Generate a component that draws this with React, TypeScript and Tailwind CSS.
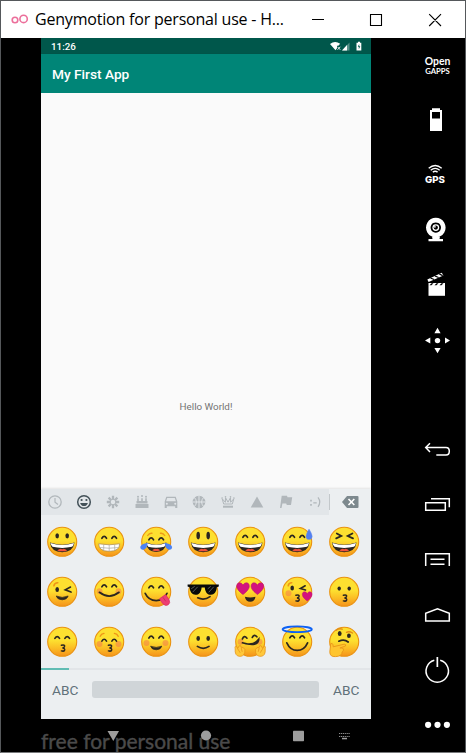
import type { ReactNode } from 'react';

const INK = '#2b2620';

function Face({ children, over }: { children: ReactNode; over?: ReactNode }) {
  return (
    <svg className="block h-8 w-8 shrink-0 overflow-visible" viewBox="-16.2 -15.8 32 32">
      <circle r="14.5" fill="url(#skin)" stroke="#ea9210" strokeWidth="1.1" />
      {children}
      {over}
    </svg>
  );
}

function Arcs({ y = -4, s = 1 }: { y?: number; s?: number }) {
  return (
    <g fill="none" stroke={INK} strokeWidth="1.7" strokeLinecap="round">
      <path d={`M${-7.3 * s} ${y + 1}q2.3 -3.7 4.6 0`} />
      <path d={`M${2.7 * s} ${y + 1}q2.3 -3.7 4.6 0`} />
    </g>
  );
}

function Dots({ y = -4, rx = 1.6, ry = 2.3 }: { y?: number; rx?: number; ry?: number }) {
  return (
    <g fill={INK}>
      <ellipse cx="-5" cy={y} rx={rx} ry={ry} />
      <ellipse cx="5" cy={y} rx={rx} ry={ry} />
    </g>
  );
}

function Grin() {
  return (
    <g>
      <path d="M-12.3 .8Q0 5 12.3 .8Q11 10.4 0 10.4Q-11 10.4 -12.3 .8Z" fill={INK} />
      <path d="M-11.8 1.2Q0 5 11.8 1.2Q11 4.3 9.7 5Q0 7.3 -9.7 5Q-11 4 -11.8 1.2Z" fill="#fff" />
      <path d="M-5 8.6Q-2 6.2 0 7.4Q2 6.2 5 8.6Q0 10.5 -5 8.6Z" fill="#f0503c" />
    </g>
  );
}

function Blush({ y = 1.5 }: { y?: number }) {
  return (
    <g fill="#f47b4c" opacity=".55">
      <circle cx="-9.7" cy={y} r="3" />
      <circle cx="9.3" cy={y} r="3" />
    </g>
  );
}

function Kiss({ x = 1 }: { x?: number }) {
  return (
    <path
      transform={`translate(${x} 6.3)`}
      d="M-1.8 -2.8Q2 -3.6 1.3 -1.5Q.8 -.4 -.7 0Q2 .3 1.4 2Q.8 3.5 -1.8 2.8"
      fill="none"
      stroke={INK}
      strokeWidth="1.5"
      strokeLinecap="round"
    />
  );
}

function Smile({ d }: { d: string }) {
  return <path d={d} fill="none" stroke={INK} strokeWidth="1.7" strokeLinecap="round" />;
}

function Heart({ x, y, s }: { x: number; y: number; s: number }) {
  return (
    <path
      transform={`translate(${x} ${y}) scale(${s})`}
      d="M0 6C-3 3.5 -6 1 -6 -2C-6 -6 -1.6 -6.3 0 -3C1.6 -6.3 6 -6 6 -2C6 1 3 3.5 0 6Z"
      fill="#d3127f"
      stroke="#b80b70"
      strokeWidth=".5"
    />
  );
}

function Emojis() {
  return (
    <div className="grid grid-cols-[repeat(7,32px)] gap-x-[15px] gap-y-[18px] pt-[11px] pl-[5px]">
      <Face><Dots y={-6} rx={1.8} ry={2.6} /><Grin /></Face>
      <Face>
        <Arcs y={-4.5} />
        <path d="M-10.5 2Q0 4 10.5 2Q10.5 9.5 0 9.5Q-10.5 9.5 -10.5 2Z" fill="#fff" stroke="#a68b5a" strokeWidth=".7" />
        <path d="M-9.5 5.7Q0 7.2 9.5 5.7M-5.5 3V9M0 3.2V9.3M5.5 3V9" fill="none" stroke="#aaa9a0" strokeWidth=".7" />
      </Face>
      <Face
        over={
          <g fill="#4d82f3">
            <path d="M-8.5 1Q-14.8 2 -16 5.3Q-15.8 9 -12 7.7Q-9 6.5 -8.5 1Z" />
            <path d="M8.5 1Q14.8 2 16 5.3Q15.8 9 12 7.7Q9 6.5 8.5 1Z" />
          </g>
        }
      >
        <Arcs y={-3} />
        <path d="M-8.5 -6.3Q-6.8 -9 -4.3 -8.5M8.5 -6.3Q6.8 -9 4.3 -8.5" fill="none" stroke="#ed9b19" strokeWidth="1.4" strokeLinecap="round" />
        <g transform="scale(.83 .98)"><Grin /></g>
      </Face>
      <Face><Dots y={-6.2} rx={1.8} ry={3.8} /><Grin /></Face>
      <Face><Arcs y={-5.5} /><Grin /></Face>
      <Face over={<path d="M11.8 -12.8Q15 -8 15 -5.3A3.1 3.1 0 0 1 8.8 -5.3Q8.8 -8 11.8 -12.8Z" fill="#5480f0" stroke="#7396e9" strokeWidth=".4" />}>
        <Arcs y={-5.5} /><Grin />
      </Face>
      <Face>
        <path d="M-7.4 -8.3L-2.9 -5.8L-8 -3.4M8.2 -8.3L3.5 -5.8L8.8 -3.4" fill="none" stroke={INK} strokeWidth="1.8" strokeLinecap="round" />
        <Grin />
      </Face>

      <Face>
        <path d="M-8.3 -6Q-7.7 -9 -4.4 -9" fill="none" stroke="#ee9417" strokeWidth="1.6" strokeLinecap="round" />
        <ellipse cx="-5" cy="-2.3" rx="1.8" ry="2.5" fill={INK} />
        <path d="M8.3 -4.8L3 -2L8.8 .3" fill="none" stroke={INK} strokeWidth="1.6" strokeLinecap="round" />
        <path d="M-6 4.2Q0 7 6 4.2Q4.8 8 0 8Q-4.8 8 -6 4.2Z" fill={INK} stroke={INK} strokeWidth=".7" />
      </Face>
      <Face><Blush y={-.5} /><Arcs y={-6} /><Smile d="M-9.8 .5Q0 8 9.8 .5" /></Face>
      <Face
        over={
          <g transform="rotate(-35 8.5 8.5)">
            <path d="M5 4.3H12.5V10A3.8 5 0 0 1 5 10Z" fill="#ed3e72" stroke="#d82f61" strokeWidth=".7" />
            <path d="M8.8 5V10" stroke="#c52b58" strokeWidth=".8" />
          </g>
        }
      >
        <Arcs y={-5} /><Smile d="M-11 1.5Q-7.7 8.5 0 8.8Q7 8.5 10.8 1.5" />
      </Face>
      <Face
        over={
          <g>
            <path d="M-15.6 -7.4H15.6V-5.2L13.6 -4.5C13.4 0 11 3 7.8 3C4 3 2 .2 1.6 -4.4H-1.6C-2 .2 -4 3 -7.8 3C-11 3 -13.4 0 -13.6 -4.5L-15.6 -5.2Z" fill="#070909" />
            <path d="M-12 -3L-8.5 -5.4M-10.5 .3L-5.5 -5M4.5 -3L7.5 -5.4M5.5 .5L10.5 -5" stroke="#565b5e" strokeWidth="1" />
          </g>
        }
      >
        <Smile d="M-5.5 6Q1 9 6.8 4.8" />
      </Face>
      <Face over={<g><Heart x={-7.2} y={-3.5} s={1.05} /><Heart x={7.2} y={-3.5} s={1.05} /></g>}>
        <path d="M-5.3 5Q0 6.3 5.3 5Q4.5 10 0 10Q-4.5 10 -5.3 5Z" fill={INK} />
      </Face>
      <Face over={<Heart x={10} y={4.3} s={.82} />}>
        <circle cx="-8.7" cy="1.5" r="3" fill="#f47b4c" opacity=".55" />
        <path d="M-9 -6Q-8.5 -9 -5.5 -9" fill="none" stroke="#ee9417" strokeWidth="1.6" strokeLinecap="round" />
        <ellipse cx="-5" cy="-3.8" rx="1.8" ry="2.5" fill={INK} />
        <path d="M8 -6L3.2 -3.3L8.3 -1.8" fill="none" stroke={INK} strokeWidth="1.6" strokeLinecap="round" />
        <Kiss x={0.5} />
      </Face>
      <Face><Dots y={-3.2} rx={1.7} ry={2.1} /><Kiss /></Face>

      <Face><Arcs y={-4.4} /><Kiss /></Face>
      <Face>
        <Blush y={2.3} />
        <path d="M-9 -5.5Q-8 -8 -5.2 -8.4M9 -5.5Q8 -8 5.2 -8.4" fill="none" stroke="#ee9417" strokeWidth="1.4" strokeLinecap="round" />
        <Arcs y={-1.7} /><Kiss />
      </Face>
      <Face>
        <Blush y={1.3} /><Arcs y={-4.8} />
        <path d="M-5.6 4.4Q0 6.8 5.6 4.4Q4.5 8 0 8Q-4.5 8 -5.6 4.4Z" fill={INK} stroke={INK} strokeWidth=".7" />
      </Face>
      <Face><Dots y={-3.3} rx={1.8} ry={2.4} /><Smile d="M-5.8 4.6Q0 8.5 5.8 4.6" /></Face>
      <Face
        over={
          <g fill="#ffc83b" stroke="#e99518" strokeWidth=".8">
            <path d="M-15 7Q-15.8 3.8 -13.6 4.7L-12.5 6.8L-11 4Q-9 3.2 -9 5.5L-6.7 6Q-4.5 7 -5.5 11Q-7 15 -11 14.5Q-15.6 14 -15 7Z" />
            <path d="M15 7Q15.8 3.8 13.6 4.7L12.5 6.8L11 4Q9 3.2 9 5.5L6.7 6Q4.5 7 5.5 11Q7 15 11 14.5Q15.6 14 15 7Z" />
            <path d="M-12.5 7L-10 11M-9 6L-8 10M12.5 7L10 11M9 6L8 10" fill="none" />
          </g>
        }
      >
        <Blush y={0} />
        <g transform="rotate(-8)"><Arcs y={-5} /></g>
        <Smile d="M-7.7 1Q3 4.7 8.5 -2.5Q8.3 5.5 -7.7 1" />
      </Face>
      <Face over={<ellipse cx="0" cy="-12.5" rx="14.6" ry="2.9" fill="none" stroke="#0d61f4" strokeWidth="1.8" />}>
        <Arcs y={-5} /><Smile d="M-10.4 1Q-7 8.6 0 8.6Q7 8.6 10.4 1" />
      </Face>
      <Face
        over={
          <path
            d="M-13.5 2Q-11.8 .8 -11.2 3L-11 5L0 2.4Q2.3 2.5 1.3 4.2L-4.3 6.2Q0 6 -.8 8Q-.5 9.2 -2 10Q-2.2 14.5 -8.5 14.8Q-14.5 15.3 -14.4 10Z"
            fill="#ffc52f"
            stroke="#e99518"
            strokeWidth=".9"
          />
        }
      >
        <path d="M-8 -11.5Q-5 -14 -2 -12.6M2.3 -9.5Q5 -11 8.3 -8.8" fill="none" stroke="#e38d16" strokeWidth="1.4" strokeLinecap="round" />
        <ellipse cx="-4.5" cy="-8.3" rx="1.9" ry="2.5" fill={INK} />
        <ellipse cx="4.7" cy="-6" rx="1.9" ry="2.3" fill={INK} />
        <Smile d="M-5.4 -.6Q0 -3.2 4 .2" />
      </Face>
    </div>
  );
}

function Tab({ children }: { children: ReactNode }) {
  return (
    <div className="flex items-center justify-center">
      <svg className="block h-4 w-4 overflow-visible" viewBox="-8 -8 16 16" fill="#b1b7bb">
        {children}
      </svg>
    </div>
  );
}

function Categories() {
  return (
    <div className="grid w-[288px] grid-cols-10 bg-[#e2e6e9]">
      <Tab>
        <circle r="6.2" fill="none" stroke="#b1b7bb" strokeWidth="1.3" />
        <path d="M0 -4V.2L3 2.5" fill="none" stroke="#b1b7bb" strokeWidth="1.2" />
      </Tab>
      <Tab>
        <circle r="6.3" fill="none" stroke="#435158" strokeWidth="1.5" />
        <g fill="#435158">
          <circle cx="-2.4" cy="-2" r="1.1" />
          <circle cx="2.4" cy="-2" r="1.1" />
          <path d="M-3.9 1H3.9Q3 4.1 0 4.1Q-3 4.1 -3.9 1Z" />
        </g>
      </Tab>
      <Tab>
        <g stroke="#b1b7bb" strokeWidth="2.3">
          <path d="M0 -6.2V-2.6M0 6.2V2.6M-6.2 0H-2.6M6.2 0H2.6M-4.4 -4.4L-2 -2M4.4 4.4L2 2M-4.4 4.4L-2 2M4.4 -4.4L2 -2" />
        </g>
        <circle r="2.8" fill="none" stroke="#b1b7bb" strokeWidth="1" />
      </Tab>
      <Tab>
        <path d="M-4.8 -3.7H-3.2V-1H-.8V-3.7H.8V-1H3.2V-3.7H4.8V-1H5.5V1.5H-5.5V-1H-4.8ZM-6.5 2H6.5V6H-6.5Z" />
        <circle cx="-4" cy="-5.3" r="1" /><circle cy="-6" r="1" /><circle cx="4" cy="-5.3" r="1" />
      </Tab>
      <Tab>
        <path fillRule="evenodd" d="M-4.7 -5.3H4.7L6.3 -.5V6H4.2V4.3H-4.2V6H-6.3V-.5ZM-3.8 -4L-4.9 -.8H4.9L3.8 -4ZM-4.2 .7A1 1 0 1 0 -4.1 2.7A1 1 0 1 0 -4.2 .7ZM4.2 .7A1 1 0 1 0 4.3 2.7A1 1 0 1 0 4.2 .7Z" />
      </Tab>
      <Tab>
        <circle r="6.3" />
        <path d="M0 -6.3V6.3M-6.3 0H6.3M-4.8 -4.8Q-.4 0 -4.8 4.8M4.8 -4.8Q.4 0 4.8 4.8" fill="none" stroke="#e2e6e9" strokeWidth="1" />
      </Tab>
      <Tab>
        <path d="M-4.3 2L-5.8 -3.2L-2.6 .3L-2.5 -4.4L0 .2L2.5 -4.4L2.6 .3L5.8 -3.2L4.3 2Z" fill="none" stroke="#b1b7bb" strokeWidth="1" />
        <path d="M-5 3.7H5V5.7H-5Z" />
        <circle cx="-5.9" cy="-4" r=".8" /><circle cx="-2.5" cy="-5.2" r=".8" /><circle cx="2.5" cy="-5.2" r=".8" /><circle cx="5.9" cy="-4" r=".8" />
      </Tab>
      <Tab><path d="M0 -5.5L6.3 5.6H-6.3Z" /></Tab>
      <Tab><path d="M-4.3 -6.2H1L1.5 -4.8H6.2L5 3H.8L.2 1.5H-3.6L-4.5 6H-6Z" /></Tab>
      <Tab>
        <path d="M-4.8 -2.2h1.6v1.7h-1.6zM-4.8 2h1.6v1.7h-1.6zM-1.7 .2h3.4v1.2h-3.4z" />
        <path d="M3 -4.6Q6.5 .1 3 4.8" fill="none" stroke="#b1b7bb" strokeWidth="1.2" />
      </Tab>
    </div>
  );
}

function Tool({ children }: { children?: ReactNode }) {
  return (
    <svg className="block h-[55px] w-10 shrink-0" viewBox="0 0 40 55" fill="#fff">
      {children}
    </svg>
  );
}

function Line({ d }: { d: string }) {
  return <path d={d} fill="none" stroke="#fff" strokeWidth="1.5" />;
}

function Toolbar() {
  return (
    <div className="flex h-[713px] w-[48px] flex-col overflow-hidden">
      <div className="flex h-[55px] w-10 shrink-0 flex-col items-center pt-[17px] pl-[1px] font-['Lato',sans-serif] text-white">
        <span className="h-[10px] text-[10.4px] leading-[12px] font-bold">Open</span>
        <span className="pt-px text-[7.7px] leading-[11px] font-bold">GAPPS</span>
      </div>
      <Tool><path fillRule="evenodd" d="M15 15.3H23V17H25V38H13V17H15ZM15 19V25.5H23V19Z" /></Tool>
      <Tool>
        <g fill="none" stroke="#fff" strokeWidth="1.4">
          <path d="M11.7 20.2Q18.2 14.8 24.7 20.2M13.7 22.2Q18.2 18.5 22.7 22.2M15.8 24.1Q18.2 22.4 20.6 24.1" />
        </g>
        <text x="8" y="34.5" textLength="20" lengthAdjust="spacingAndGlyphs" className="font-['Inter',sans-serif] text-[9.3px] font-extrabold">GPS</text>
      </Tool>
      <Tool>
        <path fillRule="evenodd" d="M18.8 14.8a9.8 9.8 0 1 0 .01 0ZM18.8 19.4a5.2 5.2 0 1 1 -.01 0Z" />
        <circle cx="18.8" cy="24.6" r="3.4" />
        <circle cx="18.8" cy="24.6" r="2.1" fill="#000" />
        <circle cx="17.9" cy="23.8" r=".9" />
        <path d="M15 33.5H23L22.5 36H26V38.3H11.5V36H15.5Z" />
      </Tool>
      <Tool>
        <path d="M11.5 25H28V37.8H11.5Z" />
        <path d="M12.5 27.2l2 -2h2l-2 2zM17.5 27.2l2 -2h2l-2 2zM22.5 27.2l2 -2h2l-2 2z" fill="#000" />
        <path d="M10.3 21.4L24.8 14.8L26.4 17.6L11.6 24Z" />
        <path d="M13.5 20l3.6 1.5M18 18l3.6 1.5M22.3 16l3.4 1.7" stroke="#000" strokeWidth="1.3" />
      </Tool>
      <Tool>
        <circle cx="20.5" cy="27.6" r="2.7" />
        <path d="M20.5 14.7L23.6 20.3H17.4ZM20.5 40.3L17.4 35H23.6ZM8 27.6L13.3 24.6V30.6ZM33 27.6L28 24.6V30.6Z" />
      </Tool>
      <Tool />
      <Tool><Line d="M13 20.2L8.7 24.5L13 29M9 24.5H29Q32.3 24.5 32.3 28.2Q32.3 32 29 32H19.3" /></Tool>
      <Tool><Line d="M8.7 24.7H28.3V32.3H8.7ZM14 20.7H32.3V29.3" /></Tool>
      <Tool><Line d="M8.7 33V20.7H32.3V33M13.5 26.2H27.5M13.5 31.2H27.5" /></Tool>
      <Tool><Line d="M8.7 33V25.2L20.5 20.8L32.3 25.2V33Z" /></Tool>
      <Tool>
        <Line d="M17.3 17.2A11.2 11.2 0 1 0 23.2 17.2" />
        <path d="M19.5 14H21.2V24H19.5Z" />
      </Tool>
      <Tool><circle cx="11.1" cy="26.8" r="3.1" /><circle cx="20.5" cy="26.8" r="3.1" /><circle cx="29.9" cy="26.8" r="3.1" /></Tool>
    </div>
  );
}

function TitleBar() {
  return (
    <div className="flex h-[37px] shrink-0 items-center bg-white pl-[10px]">
      <svg className="h-5 w-[18px]" viewBox="0 0 18 20" fill="none" stroke="#ec6f9b" strokeWidth="1.6">
        <circle cx="4" cy="10" r="2.8" />
        <circle cx="12.6" cy="8.9" r="3.7" />
      </svg>
      <span className="ml-[6px] w-[262px] pb-[2px] text-[16px] leading-[24px] tracking-[-0.2px] whitespace-nowrap text-black font-['Open_Sans',sans-serif]">
        Genymotion for personal use - H...
      </span>
      <svg className="h-5 w-[146px]" viewBox="0 0 146 20" fill="none" stroke="#000" strokeWidth="1.1">
        <path d="M15 9.5H27M73.5 4.5H84.5V15.5H73.5ZM132.2 4.2L144 16M144 4.2L132.2 16" />
      </svg>
    </div>
  );
}

function Phone() {
  return (
    <div className="flex h-[713px] w-[330px] flex-col font-['Roboto',sans-serif]">
      <div className="flex h-4 shrink-0 items-center justify-between bg-[#00574b] pr-[9px] pl-[10px] text-white">
        <span className="pt-px text-[9.8px] leading-4 font-medium">11:26</span>
        <svg className="h-4 w-8" viewBox="0 0 32 16" fill="#fff">
          <path d="M0 6Q5 2 10.2 5.8L8.3 7.8H7V10.3L5.5 12.2Z" />
          <path d="M7.5 8.8l2.8 3M10.3 8.8l-2.8 3" stroke="#fff" strokeWidth=".9" />
          <path d="M19.5 4.5V12.4H12Z" opacity=".35" />
          <path d="M17 7V12.4H12Z" />
          <path fillRule="evenodd" d="M26.5 4.8H28V3.8H30V4.8H31.3V12.6H26.5ZM29.2 5.9L27.8 8.8H28.8V11.2L30.3 8.2H29.2Z" />
        </svg>
      </div>
      <div className="h-[39px] shrink-0 bg-[#008577] pl-[11px] text-[13.7px] leading-[40px] font-medium text-white shadow-[0_1px_2px_#00000038]">
        My First App
      </div>
      <div className="flex h-[396px] shrink-0 justify-center bg-[#fafafa] pt-[307px] text-[9.8px] leading-[14px] text-[#737373]">
        Hello World!
      </div>
      <div className="flex h-[230px] shrink-0 flex-col bg-[#eceff1] shadow-[0_-1px_2px_#00000018]">
        <div className="flex h-[26px] shrink-0">
          <Categories />
          <div className="flex flex-1 items-center">
            <div className="h-4 w-px bg-[#c3c8cb]" />
            <svg className="ml-[12px] h-3 w-[17px]" viewBox="0 0 17 12">
              <path d="M5 0H15.5Q16.5 0 16.5 1V11Q16.5 12 15.5 12H5L0 6Z" fill="#7d898e" />
              <path d="M6.5 3L12.3 9M12.3 3L6.5 9" stroke="#fff" strokeWidth="1.6" />
            </svg>
          </div>
        </div>
        <div className="h-[153px] shrink-0"><Emojis /></div>
        <div className="h-[2px] shrink-0 bg-[#e2e5e8]"><div className="h-full w-[27.5px] bg-[#61bcb3]" /></div>
        <div className="flex flex-1 items-start pt-[11px] pl-[11px] text-[13.7px] leading-[19px] text-[#60717a]">
          <span className="w-10">ABC</span>
          <div className="h-[17px] w-[227px] rounded-[3px] bg-[#d0d5d8]" />
          <span className="ml-[14px]">ABC</span>
        </div>
      </div>
      <div className="relative h-8 bg-black">
        <div className="pt-[9px] text-[21px] leading-[25px] whitespace-nowrap text-[#4a4a4a] [-webkit-text-stroke:0.4px_#4a4a4a] font-['Lato',sans-serif]">
          free for personal use
        </div>
        <svg className="absolute inset-0 h-8 w-[330px]" viewBox="0 0 330 32" fill="#9d9d9d">
          <path d="M66.5 12H78L72.3 22Z" />
          <circle cx="165" cy="16.5" r="5.1" />
          <rect x="252" y="11.7" width="11" height="10.5" rx=".7" />
          <path d="M298 14.5H309M298 17.5H309" stroke="#8d8d8d" strokeWidth="1.2" strokeDasharray="1.2 .7" />
          <path d="M301 18.8H306V20.3H301Z" />
        </svg>
      </div>
    </div>
  );
}

export default function App() {
  return (
    <div className="h-[753px] w-[466px] overflow-hidden border border-[#55585b] border-b-[#77797b] bg-black">
      <svg className="absolute h-0 w-0">
        <defs>
          <linearGradient id="skin" x1="0" y1="0" x2="0" y2="1">
            <stop offset=".45" stopColor="#fde030" />
            <stop offset=".72" stopColor="#fbbd24" />
            <stop offset="1" stopColor="#f5921c" />
          </linearGradient>
        </defs>
      </svg>
      <TitleBar />
      <div className="flex pl-10">
        <Phone />
        <div className="w-[46px]" />
        <Toolbar />
      </div>
    </div>
  );
}
